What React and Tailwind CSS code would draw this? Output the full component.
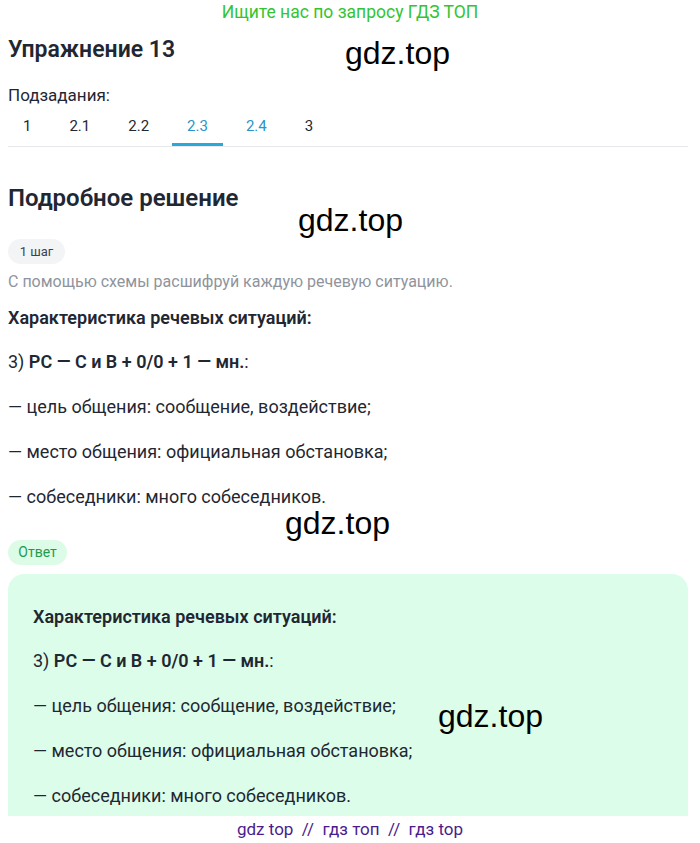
import React from 'react';

const tabs = [
    { label: '1', color: 'text-[#1f2733]' },
    { label: '2.1', color: 'text-[#1f2733]' },
    { label: '2.2', color: 'text-[#1f2733]' },
    { label: '2.3', color: 'text-[#2a94c8]', active: true },
    { label: '2.4', color: 'text-[#2a94c8]' },
    { label: '3', color: 'text-[#1f2733]' },
];

function Watermark({ className }) {
    return (
        <div className={`absolute text-[32px] leading-[32px] text-black font-['Liberation_Sans',Arial,sans-serif] ${className}`}>
            gdz.top
        </div>
    );
}

function Solution() {
    return (
        <>
            <p className="h-[24px] leading-[24px] font-semibold">Характеристика речевых ситуаций:</p>
            <p className="mt-[20px] h-[24px] leading-[24px]">
                3) <span className="font-semibold">РС — С и В + 0/0 + 1 — мн.</span>:
            </p>
            <p className="mt-[21px] h-[24px] leading-[24px]">— цель общения: сообщение, воздействие;</p>
            <p className="mt-[21px] h-[24px] leading-[24px]">— место общения: официальная обстановка;</p>
            <p className="mt-[21px] h-[24px] leading-[24px]">— собеседники: много собеседников.</p>
        </>
    );
}

export default function App() {
    return (
        <div className="relative w-[700px] h-[843px] bg-white overflow-hidden font-['Roboto','Noto_Sans',sans-serif] text-[18px] text-[#1f2733]">
            {/* Banner */}
            <div className="h-[25px] leading-[25px] text-center text-[17.5px] text-[#33c433]">Ищите нас по запросу ГДЗ ТОП</div>

            <div className="pl-2 pr-[12px]">
                <h1 className="mt-[10px] h-[30px] leading-[30px] text-[23px] font-semibold">Упражнение 13</h1>
                <p className="mt-[18px] h-[24px] leading-[24px] text-[17px]">Подзадания:</p>

                {/* Tabs */}
                <div className="flex gap-[8px] border-b border-[#e6e8eb]">
                    {tabs.map((t) => (
                        <div key={t.label} className={`h-[39px] px-[15px] flex items-center text-[15px] ${t.color} ${t.active ? 'border-b-[3px] border-[#2aa8d8] pt-[3px]' : ''}`}>
                            {t.label}
                        </div>
                    ))}
                </div>

                <h2 className="mt-[36px] h-[30px] leading-[30px] text-[24px] font-semibold">Подробное решение</h2>
                <div className="mt-[26px] w-[57px] h-[25px] rounded-full bg-[#f3f4f6] flex items-center justify-center text-[13px] text-[#3b4250]">1 шаг</div>
                <p className="mt-[6px] h-[24px] leading-[24px] text-[16px] text-[#8f949c]">С помощью схемы расшифруй каждую речевую ситуацию.</p>

                <div className="mt-[12px]">
                    <Solution />
                </div>

                <div className="mt-[31px] w-[59px] h-[25px] rounded-full bg-[#dcfce7] flex items-center justify-center text-[14px] text-[#1f9a4e]">Ответ</div>

                <div className="mt-[9px] h-[242px] rounded-t-[16px] bg-[#dbfde9] pl-[25px] pt-[31px] overflow-hidden">
                    <Solution />
                </div>
            </div>

            {/* Footer */}
            <div className="h-[26px] leading-[26px] text-center text-[17px] text-[#4a1c8c]">gdz top &nbsp;//&nbsp; гдз топ &nbsp;//&nbsp; гдз top</div>

            <Watermark className="left-[345px] top-[37px]" />
            <Watermark className="left-[298px] top-[204px]" />
            <Watermark className="left-[285px] top-[507px]" />
            <Watermark className="left-[438px] top-[700px]" />
        </div>
    );
}
